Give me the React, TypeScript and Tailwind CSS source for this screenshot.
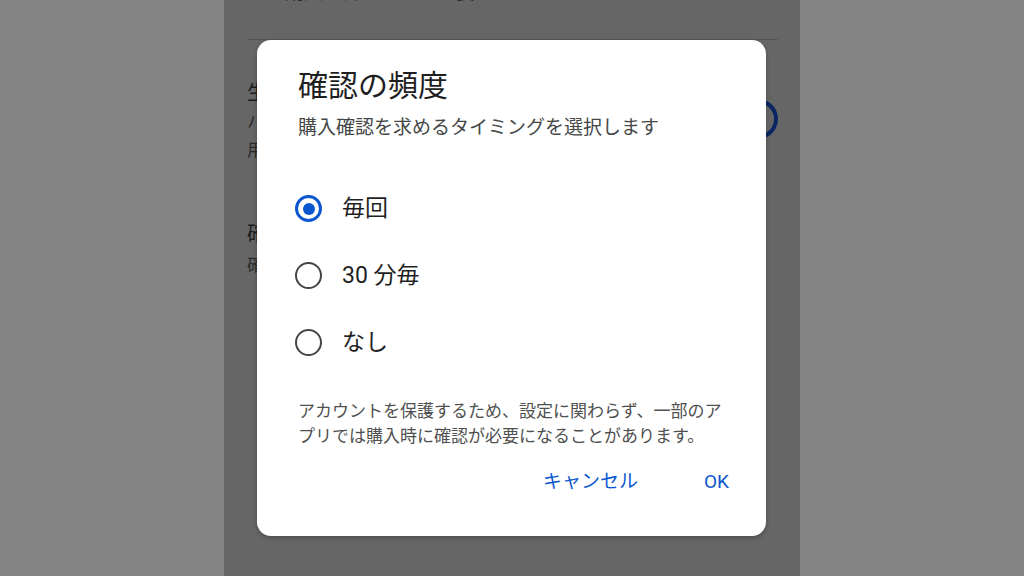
const font = { fontFamily: 'Roboto, "Noto Sans CJK JP", sans-serif' };

const options = [
  { label: '毎回', selected: true },
  { label: '30 分毎', selected: false },
  { label: 'なし', selected: false },
];

function Radio({ selected }: { selected: boolean }) {
  return (
    <span
      className={
        selected
          ? 'flex h-[27px] w-[27px] shrink-0 items-center justify-center rounded-full border-[3px] border-[#0b57d0]'
          : 'flex h-[27px] w-[27px] shrink-0 items-center justify-center rounded-full border-[2.5px] border-[#444746]'
      }
    >
      {selected && <span className="h-[12px] w-[12px] rounded-full bg-[#0b57d0]" />}
    </span>
  );
}

export default function App() {
  return (
    <div className="flex h-[576px] w-[1024px] overflow-hidden bg-[#838383]" style={font}>
      <div className="w-[224px] shrink-0" />

      {/* phone screen, dimmed by the scrim */}
      <div className="relative h-full w-[576px] shrink-0 overflow-hidden bg-[#666666]">
        <div className="flex flex-col pl-[23px] pr-[22px]">
          <p className="-mt-[21px] text-[19px] leading-[28px] text-[#262626]">
            正な購入を防ぐことは重要です。
          </p>
          <div className="mt-[32px] h-px bg-[#545454]" />
          <div className="mt-[38px] flex items-center justify-between">
            <div className="flex flex-col">
              <p className="text-[20px] leading-[30px] text-[#1c1c1c]">生体認証による確認</p>
              <p className="text-[17px] leading-[28px] text-[#2a2a2a]">ハードウェアが対応している場合に</p>
              <p className="text-[17px] leading-[28px] text-[#2a2a2a]">用いられます</p>
            </div>
            <div className="-mt-[4px] h-[40px] w-[40px] rounded-full border-[4px] border-[#0b2763]" />
          </div>
          <div className="mt-[54px] flex flex-col">
            <p className="text-[20px] leading-[32px] text-[#1c1c1c]">確認の頻度</p>
            <p className="text-[17px] leading-[30px] text-[#2a2a2a]">確認</p>
          </div>
        </div>

        {/* dialog */}
        <div className="absolute left-[33px] top-[40px] flex h-[496px] w-[509px] flex-col rounded-[14px] bg-white pl-[41px] pr-[37px] pt-[26px] shadow-[0_2px_4px_rgba(0,0,0,0.25)]">
          <h2 className="text-[30px] leading-[40px] text-[#1f1f1f]">確認の頻度</h2>
          <p className="mt-[8px] text-[19px] leading-[28px] text-[#444746]">
            購入確認を求めるタイミングを選択します
          </p>

          <div className="mt-[33px] flex flex-col">
            {options.map((o) => (
              <div key={o.label} className="-ml-[3px] flex h-[67px] items-center gap-[20px]">
                <Radio selected={o.selected} />
                <span className="text-[23px] leading-[32px] text-[#1f1f1f]">{o.label}</span>
              </div>
            ))}
          </div>

          <p className="mt-[23px] text-[17px] leading-[25px] text-[#4f5150]">
            アカウントを保護するため、設定に関わらず、一部のアプリでは購入時に確認が必要になることがあります。
          </p>

          <div className="mt-[19px] flex justify-end gap-[66px]">
            <button className="text-[19px] leading-[28px] text-[#0b57d0]">キャンセル</button>
            <button className="text-[19px] leading-[28px] text-[#0b57d0]">OK</button>
          </div>
        </div>
      </div>

      <div className="w-[224px] shrink-0" />
    </div>
  );
}
